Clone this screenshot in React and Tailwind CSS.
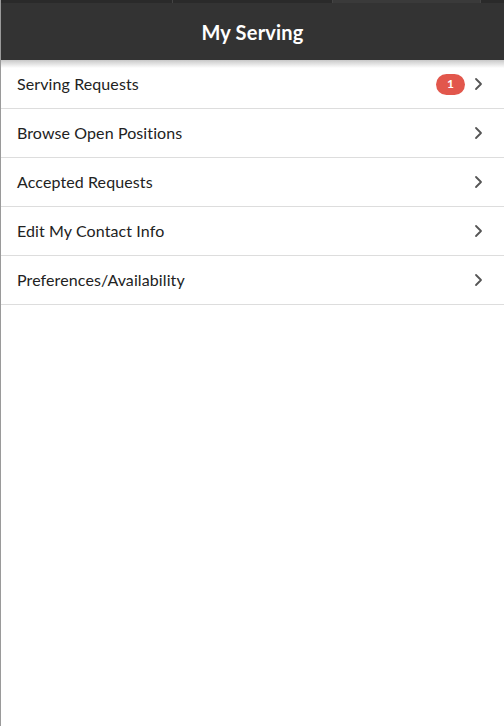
import React from "react";

const items = [
  { label: "Serving Requests", badge: 1 },
  { label: "Browse Open Positions" },
  { label: "Accepted Requests" },
  { label: "Edit My Contact Info" },
  { label: "Preferences/Availability" },
];

function Chevron() {
  return (
    <svg width="9" height="14" viewBox="0 0 9 14" fill="none">
      <path d="M2 2l5 5-5 5" stroke="#555" strokeWidth="1.8" strokeLinecap="round" strokeLinejoin="round" />
    </svg>
  );
}

export default function App() {
  return (
    <div className="w-[504px] h-[726px] bg-white overflow-hidden relative border-l border-[#9a9a9a]" style={{ fontFamily: "Lato, 'Open Sans', sans-serif" }}>
      <div className="h-[60px] bg-[#333333] relative flex items-center justify-center">
        <div className="absolute top-0 left-0 right-0 h-[3px] flex">
          <div className="w-[172px] bg-[#2a2a2a] border-r border-[#444]" />
          <div className="w-[160px] bg-[#2a2a2a] border-r border-[#444]" />
          <div className="w-[148px] bg-[#3a3a3a] border-r border-[#444]" />
          <div className="flex-1 bg-[#2a2a2a]" />
        </div>
        <span className="text-white text-[20px] font-bold tracking-[0.2px] mt-[4px]">My Serving</span>
      </div>
      <div className="relative">
        <div className="absolute top-0 left-0 right-0 h-[8px] bg-gradient-to-b from-[#c8c8c8] to-transparent pointer-events-none" />
        {items.map((it) => (
          <div key={it.label} className="h-[49px] border-b border-[#dddddd] flex items-center pl-4 pr-[21px]">
            <span className="flex-1 text-[16px] tracking-[0.1px] text-[#222]">{it.label}</span>
            {it.badge && (
              <span className="mr-[9px] w-[29px] h-[21px] rounded-full bg-[#e2574c] text-white text-[12px] font-bold flex items-center justify-center">{it.badge}</span>
            )}
            <Chevron />
          </div>
        ))}
      </div>
    </div>
  );
}
